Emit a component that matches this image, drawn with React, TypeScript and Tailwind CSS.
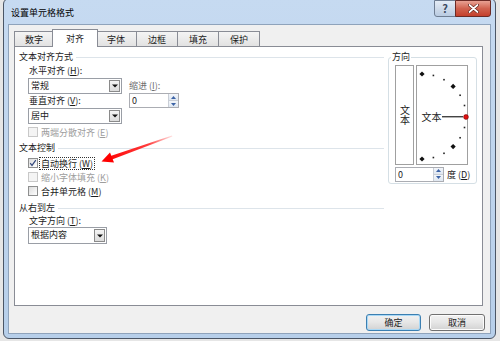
import React from 'react'

const dark = 'text-[#1b1b1b]'
const grey = 'text-[#9d9d9d]'

function Header({ label }: { label: string }) {
  return (
    <div className="flex h-[14px] items-center gap-[3px]">
      <span className="leading-[14px]">{label}</span>
      <div className="h-px flex-1 bg-[#dde4ea]" />
    </div>
  )
}

function DownArrow() {
  return (
    <svg width="6" height="4" viewBox="0 0 6 4">
      <path d="M0 0.5h6L3 3.5z" fill="#111" />
    </svg>
  )
}

function Combo({ value, width }: { value: string; width: string }) {
  return (
    <div className={`flex h-[16px] border border-[#9a9ea6] bg-white ${width}`}>
      <span className="flex-1 pl-[2px] leading-[14px]">{value}</span>
      <div className="m-px flex w-[11px] items-center justify-center border border-[#8a8a8a] bg-gradient-to-b from-[#f4f4f4] to-[#dcdcdc]">
        <DownArrow />
      </div>
    </div>
  )
}

function Spin({ width }: { width: string }) {
  return (
    <div className={`flex h-[15px] shrink-0 border border-[#abadb3] bg-white ${width}`}>
      <span className="flex-1 pl-[2px] leading-[13px]">0</span>
      <div className="flex w-[10px] flex-col border-l border-[#c9ced6]">
        <div className="flex flex-1 items-center justify-center border-b border-[#c9ced6] bg-gradient-to-b from-[#f3f6fa] to-[#dfe7f1]">
          <svg width="5" height="3" viewBox="0 0 5 3">
            <path d="M0 3h5L2.5 0z" fill="#3c63a6" />
          </svg>
        </div>
        <div className="flex flex-1 items-center justify-center bg-gradient-to-b from-[#f3f6fa] to-[#dfe7f1]">
          <svg width="5" height="3" viewBox="0 0 5 3">
            <path d="M0 0h5L2.5 3z" fill="#3c63a6" />
          </svg>
        </div>
      </div>
    </div>
  )
}

function Check({
  label,
  hot,
  checked = false,
  disabled = false,
  focus = false,
}: {
  label: string
  hot: string
  checked?: boolean
  disabled?: boolean
  focus?: boolean
}) {
  return (
    <div className="ml-[9px] flex h-[14px] items-center gap-[1px]">
      <div
        className={`flex h-[10px] w-[10px] items-center justify-center border ${
          disabled ? 'border-[#c8c8c8] bg-[#f4f4f4]' : 'border-[#8e8f8f] bg-gradient-to-br from-[#dcdcdc] to-white'
        }`}
      >
        {checked && (
          <svg width="8" height="8" viewBox="0 0 8 8">
            <path d="M1.2 4.2l1.8 2.2L6.8 1.2" stroke="#34487d" strokeWidth="1.2" fill="none" />
          </svg>
        )}
      </div>
      <span
        className={`px-[1px] leading-[11px] ${disabled ? grey : dark} ${
          focus ? 'border border-dotted border-[#333]' : 'border border-transparent'
        }`}
      >
        {label} (<span className="underline">{hot}</span>)
      </span>
    </div>
  )
}

function Dial() {
  const angles = [90, 75, 60, 45, 30, 15, 0, -15, -30, -45, -60, -75, -90]
  return (
    <svg width="52" height="100" viewBox="0 0 52 100" className="block">
      {angles.map((a) => {
        const r = (a * Math.PI) / 180
        const x = 5 + 44 * Math.cos(r)
        const y = 50.5 - 42.5 * Math.sin(r)
        if (a === 0) return null
        if (Math.abs(a) === 90 || Math.abs(a) === 45) {
          return <path key={a} d={`M${x} ${y - 2.6}L${x + 2.6} ${y}L${x} ${y + 2.6}L${x - 2.6} ${y}z`} fill="#111" />
        }
        return <rect key={a} x={x - 0.8} y={y - 0.8} width="1.6" height="1.6" fill="#222" />
      })}
      <text x="4.5" y="54.5" fontSize="10" fill="#1b1b1b" fontFamily="'Noto Sans CJK SC', sans-serif">
        文本
      </text>
      <line x1="25" y1="50.5" x2="46" y2="50.5" stroke="#444" strokeWidth="1" />
      <line x1="25" y1="51.5" x2="46" y2="51.5" stroke="#b0b0b0" strokeWidth="1" />
      <circle cx="49" cy="51" r="2.4" fill="#e01010" stroke="#700" strokeWidth="0.6" />
    </svg>
  )
}

function Tab({ label, active = false, width }: { label: string; active?: boolean; width: string }) {
  if (active) {
    return (
      <div
        className={`relative z-10 -mx-[2px] mb-[-1px] flex h-[18px] items-center justify-center border border-b-0 border-[#898c95] bg-white leading-none ${width}`}
      >
        {label}
      </div>
    )
  }
  return (
    <div
      className={`-ml-px flex h-[15px] items-center justify-center border border-b-0 border-[#898c95] bg-gradient-to-b from-[#f4f4f4] to-[#e2e2e2] leading-none first:ml-0 ${width}`}
    >
      {label}
    </div>
  )
}

function Button({ label, primary = false }: { label: string; primary?: boolean }) {
  return (
    <div
      className={`flex h-[17px] items-center justify-center rounded-[3px] border bg-gradient-to-b from-[#f2f2f2] via-[#e6e6e6] to-[#d2d2d2] leading-none ${
        primary ? 'w-[55px] border-[#3c7fb1] shadow-[inset_0_0_0_1px_#a8d8f6]' : 'w-[56px] border-[#707070] shadow-[inset_0_0_0_1px_#fcfcfc]'
      }`}
    >
      {label}
    </div>
  )
}

export default function App() {
  return (
    <div
      className={`relative h-[341px] w-[500px] overflow-hidden bg-[#e6e6e6] font-['Noto_Sans_CJK_SC','Liberation_Sans',sans-serif] text-[9px] ${dark}`}
    >
      <div className="ml-[3px] mt-[-2px] flex h-[341px] w-[493px] flex-col rounded-[6px] border border-[#4b5666] bg-gradient-to-b from-[#c6daf1] to-[#b7cfea] px-[4px] pb-[4px]">
        {/* title bar */}
        <div className="flex h-[25px] items-start justify-between">
          <span className="ml-[3px] mt-[8px] text-[9px] leading-[12px] text-black">设置单元格格式</span>
          <div className="mt-[1px] flex h-[17px]">
            <div className="flex w-[22px] items-center justify-center rounded-bl-[3px] border border-[#6e7d92] bg-gradient-to-b from-[#e4ecf6] via-[#cfdbea] to-[#b9cbe2] text-[11px] font-bold leading-none text-[#3c4a60]">
              ?
            </div>
            <div className="-ml-px flex w-[36px] items-center justify-center rounded-br-[3px] border border-[#6b2a25] bg-gradient-to-b from-[#e8a193] via-[#d0624f] to-[#c43f2c]">
              <svg width="11" height="9" viewBox="0 0 11 9">
                <path d="M1.5 1l8 7M9.5 1l-8 7" stroke="#5a1b14" strokeWidth="3" strokeLinecap="round" />
                <path d="M1.5 1l8 7M9.5 1l-8 7" stroke="#fff" strokeWidth="1.7" strokeLinecap="round" />
              </svg>
            </div>
          </div>
        </div>

        {/* client area */}
        <div className="flex flex-1 flex-col border border-[#8fa3bb] bg-[#f0f0f0]">
          <div className="flex h-[21px] items-end pl-[5px]">
            <Tab label="数字" width="w-[40px]" />
            <Tab label="对齐" active width="w-[46px]" />
            <Tab label="字体" width="w-[42px]" />
            <Tab label="边框" width="w-[42px]" />
            <Tab label="填充" width="w-[42px]" />
            <Tab label="保护" width="w-[42px]" />
          </div>

          <div className="ml-[5px] flex h-[260px] w-[469px] gap-[4px] border border-[#898c95] bg-white pl-[4px] pt-[3px]">
            {/* left column */}
            <div className="flex w-[365px] flex-col">
              <Header label="文本对齐方式" />
              <div className="flex">
                <div className="ml-[9px] flex flex-col">
                  <div className="h-[14px] pl-[1px] leading-[14px]">
                    水平对齐 (<span className="underline">H</span>):
                  </div>
                  <Combo value="常规" width="w-[94px]" />
                  <div className="h-[14px] pl-[1px] leading-[14px]">
                    垂直对齐 (<span className="underline">V</span>):
                  </div>
                  <Combo value="居中" width="w-[94px]" />
                </div>
                <div className="ml-[7px] flex flex-col pt-[15px]">
                  <div className="h-[14px] leading-[14px] text-[#6f6f6f]">
                    缩进 (<span className="underline">I</span>):
                  </div>
                  <Spin width="w-[50px]" />
                </div>
              </div>
              <div className="mt-[1px]">
                <Check label="两端分散对齐" hot="E" disabled />
              </div>
              <div className="mt-[2px]">
                <Header label="文本控制" />
              </div>
              <div className="mt-[1px] flex flex-col">
                <Check label="自动换行" hot="W" checked focus />
                <Check label="缩小字体填充" hot="K" disabled />
                <Check label="合并单元格" hot="M" />
              </div>
              <div className="mt-[3px]">
                <Header label="从右到左" />
              </div>
              <div className="ml-[10px] h-[12px] leading-[12px]">
                文字方向 (<span className="underline">T</span>):
              </div>
              <div className="ml-[9px]">
                <Combo value="根据内容" width="w-[79px] h-[17px]" />
              </div>
            </div>

            {/* direction group */}
            <fieldset className="h-[134px] w-[89px] rounded-[3px] border border-[#d5dfe5] px-[6px]">
              <legend className="ml-[-4px] px-[1px] leading-[14px]">方向</legend>
              <div className="mt-[1px] flex gap-[2px]">
                <div className="flex h-[100px] w-[19px] items-center justify-center border border-[#a0a0a0] bg-white">
                  <span className="text-[10px] leading-[12px] [writing-mode:vertical-rl]">文本</span>
                </div>
                <div className="h-[100px] w-[52px] border border-[#a0a0a0] bg-white">
                  <Dial />
                </div>
              </div>
              <div className="mt-[2px] flex h-[14px] items-center whitespace-nowrap">
                <Spin width="w-[49px] h-[14px]" />
                <span className="ml-[3px] shrink-0 leading-none">
                  度 (<span className="underline">D</span>)
                </span>
              </div>
            </fieldset>
          </div>

          <div className="mt-[8px] flex justify-end gap-[8px] pr-[5px]">
            <Button label="确定" primary />
            <Button label="取消" />
          </div>
        </div>
      </div>

      {/* red annotation arrow */}
      <svg className="pointer-events-none absolute left-0 top-0" width="500" height="341" viewBox="0 0 500 341">
        <defs>
          <linearGradient id="fade" x1="172" y1="136" x2="104" y2="160" gradientUnits="userSpaceOnUse">
            <stop offset="0" stopColor="#ff2a2a" stopOpacity="0.15" />
            <stop offset="0.35" stopColor="#ff1a1a" stopOpacity="0.85" />
            <stop offset="1" stopColor="#f00" />
          </linearGradient>
        </defs>
        <path d="M172 135.6L172.4 136.6L112 159.5L110.6 156z" fill="url(#fade)" />
        <path d="M101.5 161.5L110 152.5L114 162.5z" fill="#f00" />
      </svg>
    </div>
  )
}
